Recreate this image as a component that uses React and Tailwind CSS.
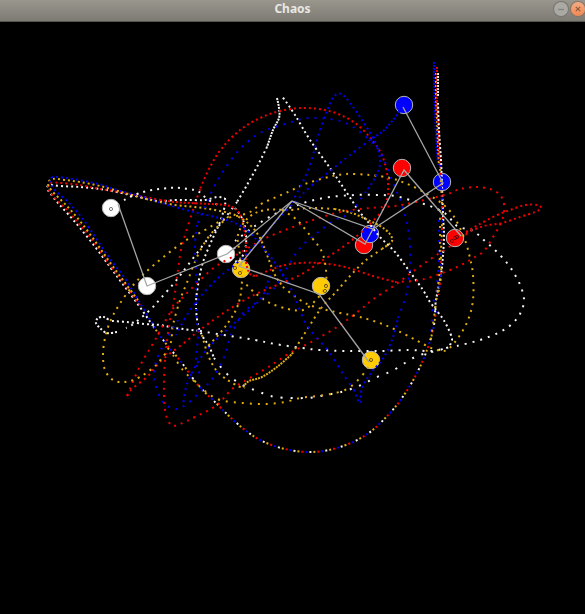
import React from 'react';

const COLORS = { white: '#f4f4f4', red: '#f00000', gold: '#e0ac10', blue: '#0000f0' };

// Bottom arc followed by every pendulum before the motions diverge.
const ARC = [[436,311],[433,330],[427,350],[418,371],[406,392],[390,413],[366,435],[337,448],[310,452],[285,449],[262,441],[245,430],[230,417],[217,404],[198,385],[182,363],[167,345],[153,326]];

const DROP = [[440,165],[441,185],[442,205],[442,230],[441,250],[441,275],[438,295]];

// gap: distance between dots; start: offset of the first dot.
const TRAILS = [
  { color: 'blue', gap: 14, start: 0, points: ARC },
  { color: 'red', gap: 14, start: 4, points: ARC },
  { color: 'gold', gap: 14, start: 8, points: ARC },
  { color: 'white', gap: 14, start: 12, points: ARC },

  { color: 'blue', gap: 1, points: [[434,62],[434,80],[435,110],[436,135],[438,165]] },
  { color: 'gold', gap: 2, points: [[436,73],[436,95],[437,120],[438,145],[439,165]] },
  { color: 'red', gap: 1, points: [[437,67],[437,100],[438,125],[439,150],[441,175]] },
  { color: 'white', gap: 1, points: [[438,73],[438,96]] },
  { color: 'white', gap: 2, points: [[438,103],[439,130],[441,160],[442,185],[443,215],[444,235],[443,255],[441,275],[436,300],[435,313]] },
  { color: 'blue', gap: 9, start: 0, points: DROP },
  { color: 'gold', gap: 9, start: 4, points: DROP },
  { color: 'red', gap: 9, start: 8, points: DROP },
  { color: 'blue', gap: 8, points: [[439,220],[439,255],[437,285],[433,305],[431,335]] },
  { color: 'gold', gap: 6, points: [[440,210],[440,240],[439,275],[435,310],[430,345]] },

  { color: 'white', gap: 3, points: [[153,326],[137,303],[122,283],[110,267],[96,248],[80,228],[68,214],[58,203],[50,193],[47,188],[50,185],[60,186],[80,187],[100,189],[112,191],[135,196],[158,201],[175,200],[190,200],[205,200],[217,197],[225,198]] },
  { color: 'red', gap: 3, points: [[140,305],[123,282],[110,265],[96,245],[80,225],[66,209],[53,196],[48,187],[51,183],[62,183],[80,185],[100,189],[125,193],[160,200]] },
  { color: 'gold', gap: 3, points: [[138,300],[123,280],[109,261],[95,241],[80,221],[66,205],[52,191],[48,183],[53,179],[65,180],[80,182],[100,186],[125,193],[150,200]] },
  { color: 'blue', gap: 3, points: [[155,328],[140,303],[124,277],[110,259],[96,238],[82,218],[68,202],[55,190],[50,182],[53,177],[66,178],[84,181],[102,185],[117,190],[140,196],[158,202]] },

  { color: 'white', gap: 3, points: [[225,198],[225,205],[220,222],[212,240],[203,262],[198,285],[196,305],[198,325],[203,337],[209,346],[214,358]] },
  { color: 'white', gap: 8, points: [[214,358],[225,372],[239,383],[257,391],[276,397],[306,398],[326,395],[345,391],[361,385],[377,377],[392,371],[405,363],[415,357],[427,353],[440,350],[450,345]] },
  { color: 'white', gap: 3, points: [[450,345],[452,339],[448,328],[443,319],[437,311],[430,302],[423,290],[410,272],[395,252],[380,237],[368,222],[359,211],[345,190],[330,168],[310,140],[295,115],[284,99],[281,97]] },
  { color: 'white', gap: 1, points: [[277,98],[279,108],[279,118],[273,130],[267,147]] },
  { color: 'white', gap: 3, points: [[267,147],[258,165],[247,185],[237,202]] },
  { color: 'white', gap: 5, points: [[237,202],[222,222],[207,240],[188,265],[175,282],[161,298],[152,308],[142,317],[132,325],[126,328]] },
  { color: 'white', gap: 2, points: [[117,332],[107,333],[100,328],[96,323],[98,318],[104,317],[109,320]] },
  { color: 'white', gap: 3, points: [[112,321],[127,322],[145,324],[160,325],[175,328],[200,331]] },
  { color: 'white', gap: 6, points: [[200,331],[230,336],[255,340],[275,344],[302,348],[320,350],[347,351],[380,351],[410,350],[432,351],[450,347]] },
  { color: 'white', gap: 6, points: [[457,346],[480,340],[500,332],[513,323],[521,312],[524,300],[521,287],[515,275],[507,263],[496,251],[485,241],[473,231],[457,226],[446,214],[430,206],[410,200],[395,196],[380,195],[355,195],[330,197],[310,201],[292,207],[275,214],[255,226],[235,241]] },
  { color: 'white', gap: 5, points: [[124,200],[132,196],[147,191],[168,188],[181,188],[194,190],[201,193],[207,199],[220,206]] },
  { color: 'white', gap: 3, points: [[235,208],[243,220],[246,235],[245,250],[238,262],[232,254],[236,246]] },

  { color: 'red', gap: 2, points: [[160,200],[175,202],[190,203],[210,204],[225,205],[234,208],[241,216],[244,228],[246,245],[246,262],[250,274],[256,276]] },
  { color: 'red', gap: 3, points: [[256,276],[270,270],[285,265],[300,263],[320,263],[345,267],[373,276],[395,282]] },
  { color: 'red', gap: 5, points: [[395,282],[420,280],[445,272],[463,264],[475,257],[484,251],[493,237],[500,225],[504,213],[503,200],[495,191],[478,187],[460,189],[448,194],[420,201],[395,206],[370,208],[340,212],[310,221],[280,232],[260,241],[240,253],[215,267],[190,290],[172,310],[155,340],[140,366],[127,396]] },
  { color: 'red', gap: 4, points: [[127,396],[133,388],[148,376],[162,360],[184,343],[200,330],[225,312],[250,297],[270,288],[300,275],[320,262],[340,249],[357,236],[372,222],[384,208],[388,195]] },
  { color: 'red', gap: 3, points: [[388,195],[388,183],[386,168],[381,153],[372,140],[360,127],[345,117],[325,110],[302,108],[280,111],[260,118],[240,130],[222,148],[210,167],[200,189]] },
  { color: 'red', gap: 5, points: [[200,189],[193,210],[186,232],[181,250],[178,270],[174,300],[170,320],[166,350],[164,380],[165,410],[171,425],[180,424],[195,417],[217,405],[232,389],[250,378],[270,366],[290,353],[315,340],[340,325],[360,310],[375,298],[395,285],[415,270],[435,256],[455,243],[470,231]] },
  { color: 'red', gap: 3, points: [[466,233],[484,226],[502,223],[520,217],[535,212],[541,208],[537,205],[525,205],[510,210],[495,216],[478,225],[466,232]] },

  { color: 'gold', gap: 3, points: [[150,200],[175,205],[195,207],[215,210],[235,215],[250,225],[260,238],[267,255],[275,275],[283,287]] },
  { color: 'gold', gap: 5, points: [[283,287],[300,300],[315,307],[340,313],[360,317],[385,325],[410,337],[425,345],[437,350],[447,350],[458,338],[468,320],[473,300],[473,275],[470,258],[465,240],[456,220],[448,209],[437,200],[420,190],[405,183],[390,178],[370,175],[345,174],[325,178],[305,184],[288,192],[263,203],[248,213],[225,219],[205,230],[182,243],[155,264],[135,283],[119,305],[110,322],[105,338],[103,355],[105,370],[113,380],[125,382],[140,377],[157,364],[170,345],[173,325],[180,300],[188,280],[197,257],[210,235],[230,215]] },
  { color: 'gold', gap: 6, points: [[173,355],[182,369],[193,380],[205,391],[220,400],[243,403],[265,404],[285,402],[300,398],[325,395],[345,390],[357,381],[367,369],[371,360]] },
  { color: 'gold', gap: 4, points: [[202,335],[208,355],[216,370],[226,379],[238,386],[245,388]] },
  { color: 'gold', gap: 1, points: [[243,387],[249,381],[262,377],[277,367],[292,354]] },
  { color: 'gold', gap: 4, points: [[292,354],[300,341],[310,325],[322,307],[335,293],[350,276],[365,261],[382,249]] },
  { color: 'gold', gap: 2, points: [[382,249],[392,241],[389,233],[380,226],[368,220],[352,213],[335,209]] },
  { color: 'gold', gap: 4, points: [[335,209],[310,208],[290,210],[265,210],[248,218],[238,235],[240,255],[242,280],[238,305],[225,327],[207,347]] },
  { color: 'gold', gap: 5, points: [[282,210],[297,220],[312,238],[322,252],[326,270],[325,287],[315,301],[303,310],[288,309],[270,303],[255,293],[243,281]] },

  { color: 'blue', gap: 3, points: [[158,202],[190,211],[215,217],[235,223],[250,233],[265,250],[278,267],[288,282]] },
  { color: 'blue', gap: 5, points: [[288,282],[296,300],[305,322],[317,338],[330,353],[343,374],[354,390]] },
  { color: 'blue', gap: 3, points: [[354,390],[360,403],[362,388],[371,373],[384,357],[393,337],[398,318]] },
  { color: 'blue', gap: 6, points: [[398,318],[406,295],[410,265],[409,235],[403,208],[393,183],[380,152],[360,132],[340,121],[310,118],[285,124],[260,133],[240,149],[224,170],[213,189],[205,207],[197,225]] },
  { color: 'blue', gap: 5, points: [[197,225],[195,245],[196,275],[196,310],[198,335],[196,360],[200,375]] },
  { color: 'blue', gap: 6, points: [[178,320],[165,342],[156,362],[155,382],[163,402],[176,409],[188,403],[204,388],[215,375],[225,355],[231,335],[244,312],[260,300],[277,285],[288,267],[300,248],[317,233],[335,220],[350,213],[365,193]] },
  { color: 'blue', gap: 3, points: [[365,193],[375,178],[380,163],[376,144],[362,120],[350,103],[343,95],[337,94],[331,101],[325,117]] },
  { color: 'blue', gap: 4, points: [[325,117],[319,133],[313,155],[306,175],[297,193],[292,203]] },
  { color: 'blue', gap: 2, points: [[402,108],[393,120],[383,131],[370,140]] },
  { color: 'blue', gap: 4, points: [[370,140],[350,155],[330,171],[310,187],[295,202],[275,222],[257,243],[238,262],[218,278],[200,297],[187,315],[176,335]] },
  { color: 'blue', gap: 4, points: [[270,275],[262,297],[247,312],[230,327],[212,344],[198,362],[187,384],[183,405]] },
];

const PENDULUMS = [
  { fill: '#ff0000', bobs: [[364,245],[402,168],[455,238]], rods: [[292,201],[365,244],[404,170],[461,236]] },
  { fill: '#0000ff', bobs: [[370,234],[442,182],[404,105]], rods: [[292,201],[373,229],[443,183],[403,107]] },
  { fill: '#ffffff', bobs: [[226,254],[147,286],[111,208]], rods: [[292,201],[227,254],[147,286],[118,204]] },
  { fill: '#ffcb05', bobs: [[241,269],[321,286],[371,360]], rods: [[292,201],[239,266],[319,294],[369,362]] },
];

const RINGS = [[111,209],[371,360],[326,286],[325,291],[240,273],[235,268],[452,241],[455,238],[457,237]];

// Smooth curve through all points (Catmull-Rom as cubic Béziers).
function curve(points) {
  let d = `M${points[0][0]} ${points[0][1]}`;
  for (let i = 0; i < points.length - 1; i++) {
    const a = points[i - 1] || points[i];
    const b = points[i];
    const c = points[i + 1];
    const e = points[i + 2] || c;
    d += `C${b[0] + (c[0] - a[0]) / 6} ${b[1] + (c[1] - a[1]) / 6} ${c[0] - (e[0] - b[0]) / 6} ${c[1] - (e[1] - b[1]) / 6} ${c[0]} ${c[1]}`;
  }
  return d;
}

function Trail({ color, gap, start = 0, points }) {
  return (
    <path
      d={curve(points)}
      fill="none"
      stroke={COLORS[color]}
      strokeWidth="2"
      strokeDasharray={`2 ${gap}`}
      strokeDashoffset={-start}
    />
  );
}

function TitleBar() {
  return (
    <header className="grid h-[22px] grid-cols-[1fr_auto_1fr] items-center border-b border-[#55534d] bg-linear-to-b from-[#99968d] to-[#7d7b74]">
      <span />
      <h1 className="pb-1 font-['Noto_Sans',sans-serif] text-xs leading-4 font-bold text-[#e9e7e2]">Chaos</h1>
      <div className="flex justify-end gap-[3px] pb-1">
        <button type="button" aria-label="Minimize" className="size-[14px] rounded-full bg-[#aaa9a4] ring-1 ring-[#77756e]">
          <svg viewBox="0 0 14 14" className="size-full"><path d="M4 7.5h6" stroke="#85837d" strokeWidth="1.3" /></svg>
        </button>
        <button type="button" aria-label="Close" className="size-[14px] rounded-full bg-linear-to-b from-[#f2ab85] to-[#f2894f] ring-1 ring-[#8b7263]">
          <svg viewBox="0 0 14 14" className="size-full"><path d="M4.8 4.8l4.4 4.4M9.2 4.8l-4.4 4.4" stroke="#8e593b" strokeWidth="1.2" /></svg>
        </button>
      </div>
    </header>
  );
}

export default function App() {
  return (
    <div className="flex min-h-screen flex-col bg-black">
      <TitleBar />
      <main>
        <svg viewBox="0 22 585 592" className="block h-auto w-full" role="img" aria-label="Four chaotic triple pendulums and their trails">
          {PENDULUMS.map(({ fill, bobs }) => (
            <g key={fill} fill={fill} stroke="#b5b5b5" strokeWidth="1">
              {bobs.map(([x, y]) => <circle key={`${x}-${y}`} cx={x} cy={y} r="8.7" />)}
            </g>
          ))}
          {TRAILS.map((trail, i) => <Trail key={i} {...trail} />)}
          {PENDULUMS.map(({ fill, rods }) => (
            <polyline key={fill} points={rods.join(' ')} fill="none" stroke="#a5a5a5" strokeWidth="1.3" />
          ))}
          {RINGS.map(([x, y]) => (
            <circle key={`${x}-${y}`} cx={x} cy={y} r="1.6" fill="none" stroke="#000" strokeOpacity="0.65" strokeWidth="0.8" />
          ))}
        </svg>
      </main>
    </div>
  );
}
